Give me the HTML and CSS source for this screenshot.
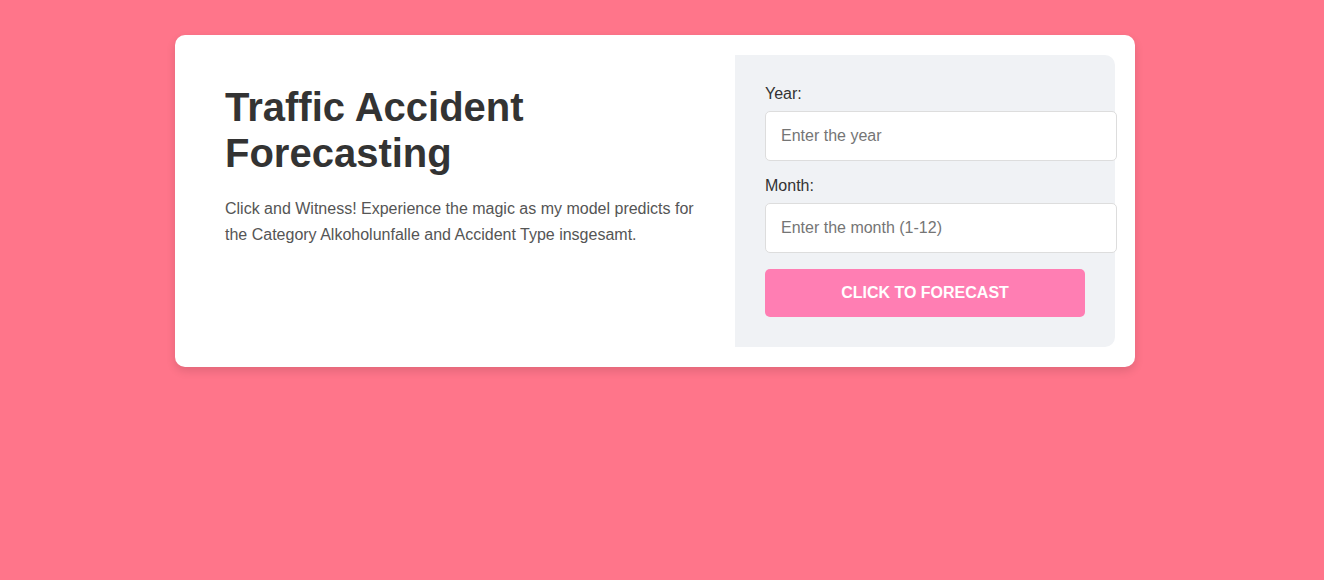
FILE: index.html
```html
<!DOCTYPE html>
<html lang="en">
<head>
<meta charset="utf-8">
<title>Traffic Accident Forecasting</title>
<link rel="stylesheet" href="styles.css">
</head>
<body>
<div class="card">
  <div class="intro">
    <h1 class="title">Traffic Accident Forecasting</h1>
    <p class="desc">Click and Witness! Experience the magic as my model predicts for the Category Alkoholunfalle and Accident Type insgesamt.</p>
  </div>
  <form class="panel">
    <label class="label" for="year">Year:</label>
    <input class="field" id="year" type="text" placeholder="Enter the year">
    <label class="label" for="month">Month:</label>
    <input class="field" id="month" type="text" placeholder="Enter the month (1-12)">
    <button class="btn" type="button">Click to Forecast</button>
  </form>
</div>
</body>
</html>
```

FILE: styles.css
```css
html, body {
  margin: 0;
  padding: 0;
}
body {
  background: #ff758a;
  font-family: "Liberation Sans", Arial, sans-serif;
  min-height: 580px;
  padding: 35px 14px 0 0;
  box-sizing: border-box;
}
.card {
  width: 960px;
  margin: 0 auto;
  background: #fff;
  border-radius: 10px;
  box-shadow: 0 4px 10px rgba(0, 0, 0, 0.12);
  padding: 20px;
  box-sizing: border-box;
  display: flex;
}
.intro {
  width: 540px;
  padding: 29px 30px 30px 30px;
  box-sizing: border-box;
}
.title {
  margin: 0 0 20px 0;
  font-size: 40px;
  font-weight: bold;
  color: #333;
  line-height: 46px;
}
.desc {
  margin: 0;
  font-size: 16px;
  line-height: 26px;
  color: #555;
}
.panel {
  width: 380px;
  background: #f0f2f5;
  border-radius: 0 10px 10px 0;
  padding: 30px 30px 30px 30px;
  box-sizing: border-box;
  margin: 0;
}
.label {
  display: block;
  font-size: 16px;
  line-height: 18px;
  color: #333;
  margin-bottom: 8px;
}
.field {
  display: block;
  width: 320px;
  padding: 15px;
  font-size: 16px;
  line-height: 18px;
  font-family: "Liberation Sans", Arial, sans-serif;
  border: 1px solid #ddd;
  border-radius: 5px;
  background: #fff;
  color: #333;
  margin: 0 0 16px 0;
  outline: none;
}
.field::placeholder {
  color: #757575;
}
.btn {
  display: block;
  width: 320px;
  height: 48px;
  border: none;
  border-radius: 5px;
  background: #ff7eb3;
  color: #fff;
  font-family: "Liberation Sans", Arial, sans-serif;
  font-size: 16px;
  font-weight: bold;
  text-transform: uppercase;
  cursor: pointer;
}
```
